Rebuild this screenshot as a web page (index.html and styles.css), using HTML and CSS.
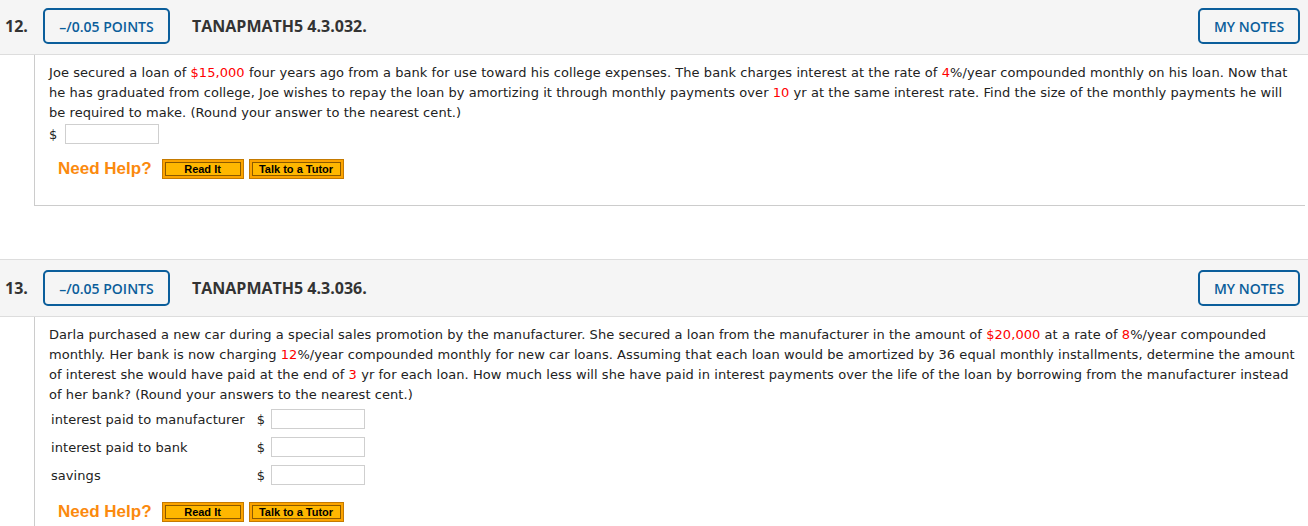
FILE: index.html
```html
<!DOCTYPE html>
<html>
<head>
<meta charset="utf-8">
<link rel="stylesheet" href="styles.css">
</head>
<body>
<div class="page">
  <section class="question q1">
    <div class="qhead">
      <span class="qnum">12.</span>
      <button class="outline-btn points">–/0.05 POINTS</button>
      <span class="qtitle">TANAPMATH5 4.3.032.</span>
      <button class="outline-btn notes">MY NOTES</button>
    </div>
    <div class="qbody">
      <p class="qtext">Joe secured a loan of <span class="red">$15,000</span> four years ago from a bank for use toward his college expenses. The bank charges interest at the rate of <span class="red">4</span>%/year compounded monthly on his loan. Now that he has graduated from college, Joe wishes to repay the loan by amortizing it through monthly payments over <span class="red">10</span> yr at the same interest rate. Find the size of the monthly payments he will be required to make. (Round your answer to the nearest cent.)</p>
      <div class="answer-line"><span class="dollar">$</span><span class="field"></span></div>
      <div class="help">
        <span class="need">Need Help?</span>
        <span class="help-btn read">Read It</span>
        <span class="help-btn tutor">Talk to a Tutor</span>
      </div>
    </div>
  </section>

  <section class="question q2">
    <div class="qhead">
      <span class="qnum">13.</span>
      <button class="outline-btn points">–/0.05 POINTS</button>
      <span class="qtitle">TANAPMATH5 4.3.036.</span>
      <button class="outline-btn notes">MY NOTES</button>
    </div>
    <div class="qbody last">
      <p class="qtext">Darla purchased a new car during a special sales promotion by the manufacturer. She secured a loan from the manufacturer in the amount of <span class="red">$20,000</span> at a rate of <span class="red">8</span>%/year compounded monthly. Her bank is now charging <span class="red">12</span>%/year compounded monthly for new car loans. Assuming that each loan would be amortized by 36 equal monthly installments, determine the amount of interest she would have paid at the end of <span class="red">3</span> yr for each loan. How much less will she have paid in interest payments over the life of the loan by borrowing from the manufacturer instead of her bank? (Round your answers to the nearest cent.)</p>
      <table class="answers">
        <tr><td class="lbl">interest paid to manufacturer</td><td class="cur">$</td><td><span class="field"></span></td></tr>
        <tr><td class="lbl">interest paid to bank</td><td class="cur">$</td><td><span class="field"></span></td></tr>
        <tr><td class="lbl">savings</td><td class="cur">$</td><td><span class="field"></span></td></tr>
      </table>
      <div class="help">
        <span class="need">Need Help?</span>
        <span class="help-btn read">Read It</span>
        <span class="help-btn tutor">Talk to a Tutor</span>
      </div>
    </div>
  </section>
</div>
</body>
</html>
```
FILE: styles.css
```css
html, body {
  margin: 0;
  padding: 0;
  background: #fff;
}
body {
  overflow: hidden;
}
.page {
  margin-top: -3px;
}
.question + .question {
  margin-top: 53px;
}
.qhead {
  display: flex;
  align-items: center;
  height: 56px;
  background: #f5f5f5;
  border-top: 1px solid #dddddd;
  border-bottom: 1px solid #dddddd;
  padding: 0 8px 0 5px;
  font-family: "Open Sans", sans-serif;
}
.qnum {
  font-weight: 700;
  font-size: 16px;
  color: #333;
  width: 38px;
}
.outline-btn {
  font-family: "Open Sans", sans-serif;
  font-weight: 600;
  font-size: 14px;
  color: #0b5e9b;
  background: transparent;
  border: 2px solid #0b5e9b;
  border-radius: 5px;
  height: 36px;
  padding: 0;
  margin: 0;
}
.points {
  width: 127px;
}
.notes {
  width: 102px;
  margin-left: auto;
}
.qtitle {
  margin-left: 22px;
  font-weight: 700;
  font-size: 16px;
  color: #333;
}
.qbody {
  margin-left: 34px;
  margin-right: 3px;
  border-left: 1px solid #cccccc;
  border-bottom: 1px solid #cccccc;
  padding: 8px 6px 26px 14px;
  font-family: "DejaVu Sans", Verdana, sans-serif;
  font-size: 13px;
  letter-spacing: 0.06px;
  color: #222;
}
.qbody.last {
  border-bottom: none;
}
.qtext {
  margin: 0;
  line-height: 20px;
}
.red {
  color: #f00;
}
.answer-line {
  display: flex;
  align-items: center;
  gap: 8px;
  margin-top: 1px;
}
.field {
  display: inline-block;
  width: 92px;
  height: 18px;
  border: 1px solid #cfcfcf;
  background: #fff;
  vertical-align: middle;
}
.answers {
  border-collapse: separate;
  border-spacing: 0;
  margin-top: 4px;
}
.answers td {
  padding: 0 2px 8px 2px;
  height: 20px;
  vertical-align: middle;
}
.answers td.lbl {
  padding-right: 10px;
}
.answers td.cur {
  padding-right: 4px;
}
.help {
  display: flex;
  align-items: center;
  margin-top: 15px;
  padding-left: 9px;
  gap: 5px;
}
.answers + .help {
  margin-top: 9px;
}
.need {
  font-family: "Liberation Sans", Arial, sans-serif;
  font-weight: 700;
  font-size: 17px;
  letter-spacing: 0;
  color: #fb8a0e;
  margin-right: 5px;
}
.help-btn {
  display: inline-flex;
  align-items: center;
  justify-content: center;
  box-sizing: border-box;
  height: 20px;
  border: 1px solid #c57a00;
  background: #ffb700;
  box-shadow: inset 0 0 0 2px #fca400, inset 0 0 0 3px #8c5a00;
  font-family: "Liberation Sans", Arial, sans-serif;
  font-weight: 700;
  font-size: 11px;
  letter-spacing: 0;
  color: #000;
}
.read {
  width: 82px;
}
.tutor {
  width: 95px;
}
```
